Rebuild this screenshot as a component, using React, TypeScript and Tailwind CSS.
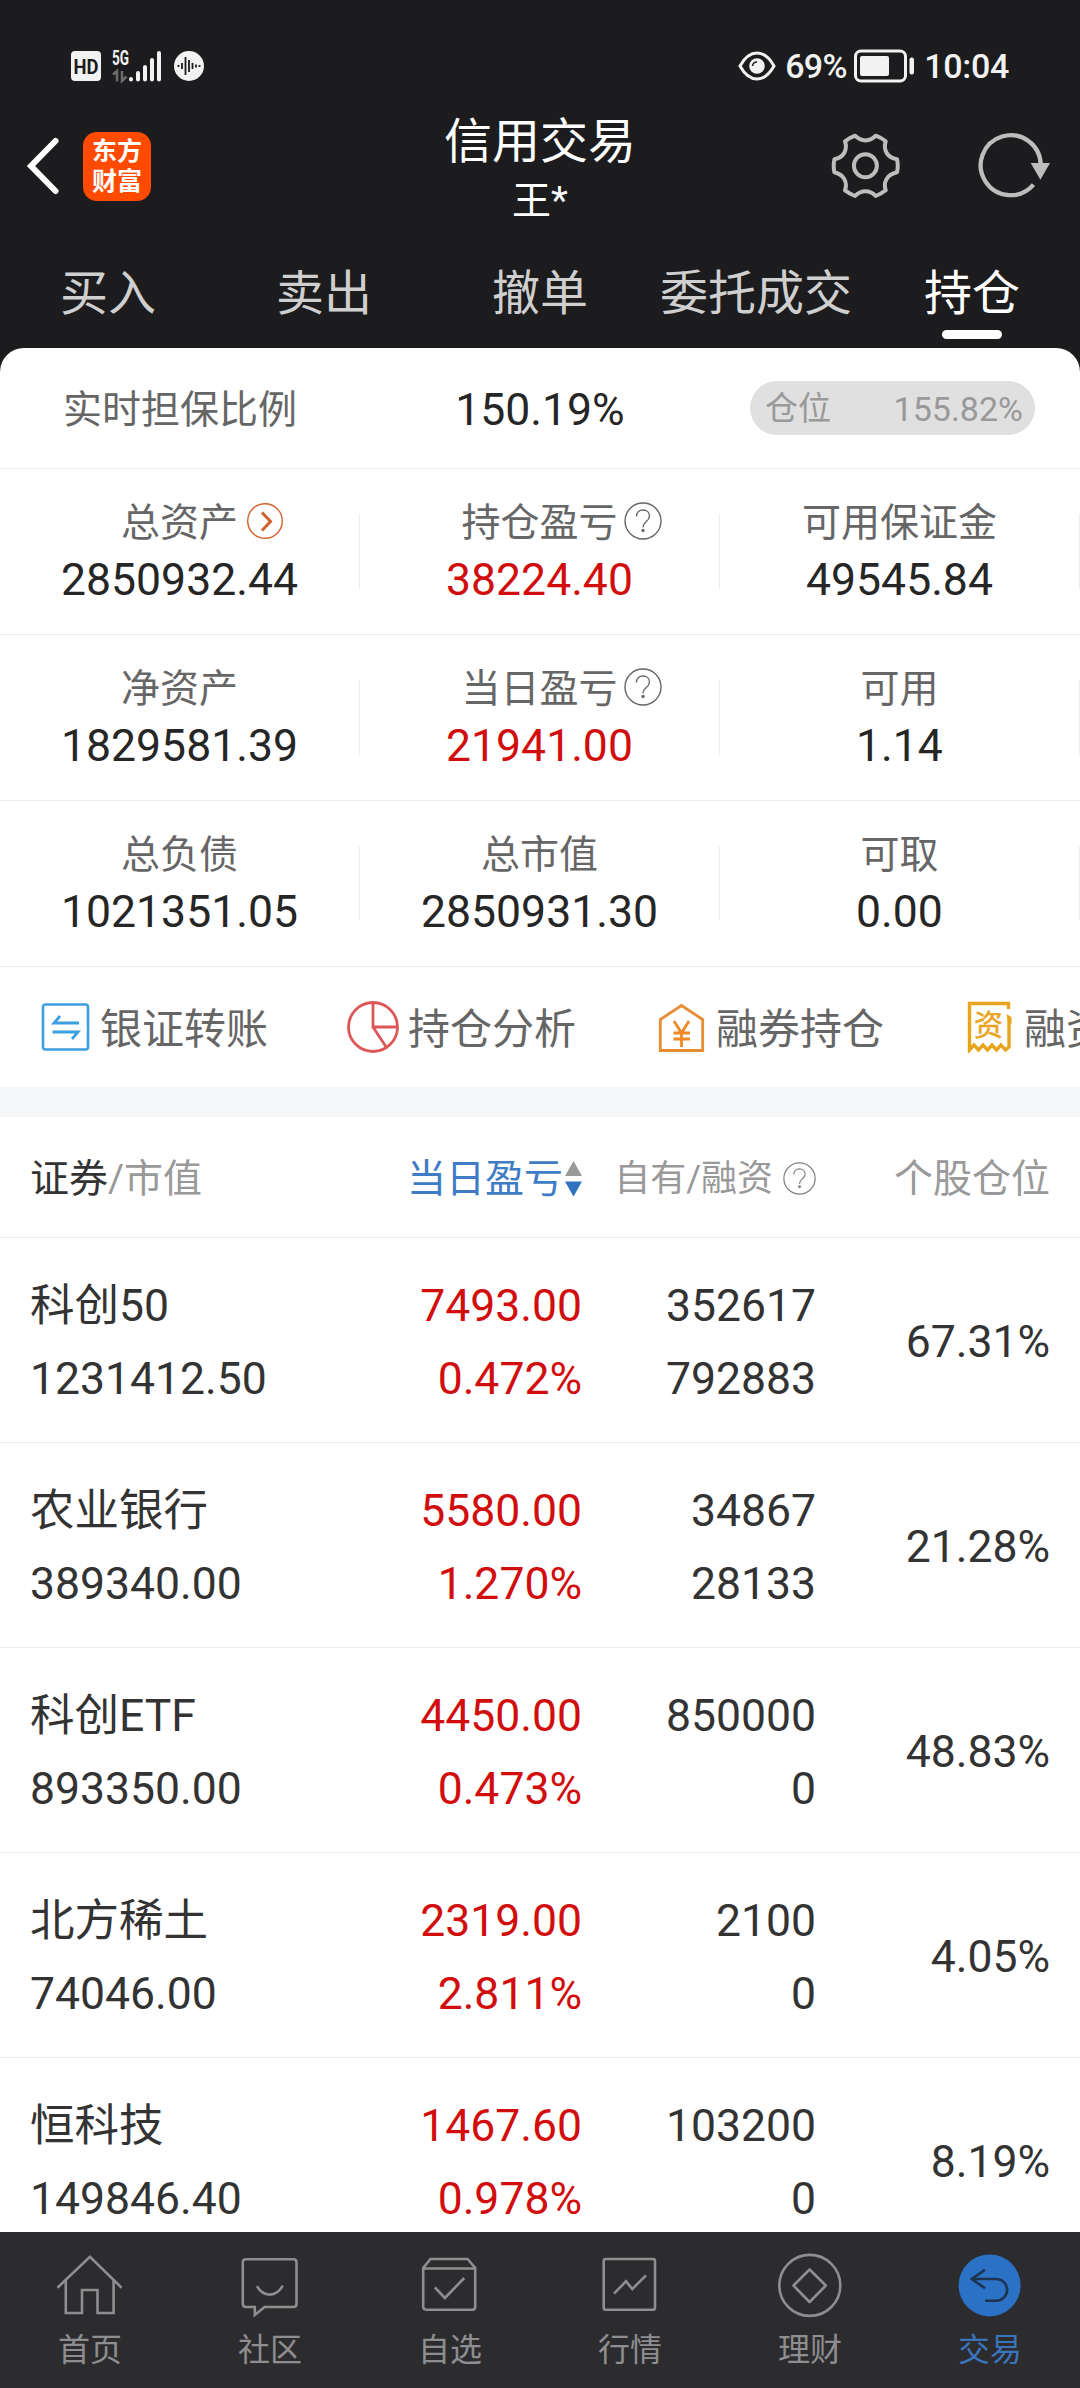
import type { ReactNode } from 'react';
import clsx from 'clsx';

const tabs = ['买入', '卖出', '撤单', '委托成交', '持仓'];

type Stat = { label: string; value: string; red?: boolean; icon?: 'arrow' | 'help' };

const stats: Stat[][] = [
  [
    { label: '总资产', value: '2850932.44', icon: 'arrow' },
    { label: '持仓盈亏', value: '38224.40', red: true, icon: 'help' },
    { label: '可用保证金', value: '49545.84' },
  ],
  [
    { label: '净资产', value: '1829581.39' },
    { label: '当日盈亏', value: '21941.00', red: true, icon: 'help' },
    { label: '可用', value: '1.14' },
  ],
  [
    { label: '总负债', value: '1021351.05' },
    { label: '总市值', value: '2850931.30' },
    { label: '可取', value: '0.00' },
  ],
];

const holdings = [
  { name: '科创50', market: '1231412.50', profit: '7493.00', rate: '0.472%', own: '352617', margin: '792883', weight: '67.31%' },
  { name: '农业银行', market: '389340.00', profit: '5580.00', rate: '1.270%', own: '34867', margin: '28133', weight: '21.28%' },
  { name: '科创ETF', market: '893350.00', profit: '4450.00', rate: '0.473%', own: '850000', margin: '0', weight: '48.83%' },
  { name: '北方稀土', market: '74046.00', profit: '2319.00', rate: '2.811%', own: '2100', margin: '0', weight: '4.05%' },
  { name: '恒科技', market: '149846.40', profit: '1467.60', rate: '0.978%', own: '103200', margin: '0', weight: '8.19%' },
];

function HelpIcon({ className }: { className?: string }) {
  return (
    <svg viewBox="0 0 38 38" className={className} fill="none" stroke="currentColor" strokeWidth="1.4">
      <circle cx="19" cy="19" r="18" />
      <path d="M12.500 14.500c0-4 2.700-6.500 6.500-6.500s6.500 2.400 6.500 6c0 3-1.800 4.300-3.800 6-1.900 1.600-2.700 2.800-2.700 5.300" />
      <circle cx="19" cy="28.500" r="1" fill="currentColor" />
    </svg>
  );
}

function ArrowIcon({ className }: { className?: string }) {
  return (
    <svg viewBox="0 0 38 38" className={className} fill="none" stroke="#d0622a">
      <circle cx="19" cy="19" r="17.300" strokeWidth="1.400" />
      <path d="M16 10.500l8.500 9-8.500 9" strokeWidth="3" />
    </svg>
  );
}

function StatusBar() {
  return (
    <div className="flex h-[102px] shrink-0 items-center justify-between pt-[30px] pr-[71px] pl-[71px] text-[#f2f2f2]">
      <div className="flex items-center">
        <svg viewBox="0 0 30 30" className="h-[30px] w-[30px]">
          <rect width="30" height="30" rx="4" fill="#f2f2f2" />
          <text x="2.500" y="22.500" fill="#1c1c1e" fontSize="21" fontWeight="700" textLength="25" lengthAdjust="spacingAndGlyphs">HD</text>
        </svg>
        <svg viewBox="0 0 52 34" className="ml-[10px] h-[34px] w-[52px] overflow-visible">
          <text x="1" y="15.500" fill="#f2f2f2" fontSize="20" fontWeight="700" textLength="17" lengthAdjust="spacingAndGlyphs">5G</text>
          <g stroke="#6b6b6d" strokeWidth="2.500" fill="none">
            <path d="M2 25.500l4-3.500v10.500M11 22v10l4.500-4.500" />
          </g>
          <g stroke="#f2f2f2" strokeWidth="4" strokeLinecap="round">
            <path d="M20 30v.500M27 24v6.500M34 18v12.500M41 11v19.500M48 4v26.500" />
          </g>
        </svg>
        <svg viewBox="0 0 30 30" className="ml-[11px] h-[30px] w-[30px]">
          <circle cx="15" cy="15" r="15" fill="#f2f2f2" />
          <path d="M4.500 14v2M8 12v6M11.500 6v18M15 9v12M18.500 12v6M22 13.500v3M25.500 14v2" stroke="#1c1c1e" strokeWidth="1.800" />
        </svg>
      </div>
      <div className="flex items-center">
        <svg viewBox="0 0 38 30" className="h-[30px] w-[38px]" fill="none" stroke="#f2f2f2" strokeWidth="3">
          <path d="M2 15C7 6 13 2 19 2s12 4 17 13c-5 9-11 13-17 13S7 24 2 15z" />
          <circle cx="19" cy="15" r="7.800" fill="#f2f2f2" stroke="none" />
          <path d="M14.500 15a4.500 4.500 0 0 1 4.500-4" stroke="#1c1c1e" strokeWidth="1.500" />
        </svg>
        <span className="ml-[9px] w-[62px] text-[34px] leading-none font-medium tracking-[-0.7px]">69%</span>
        <svg viewBox="0 0 62 34" className="ml-[7px] h-[34px] w-[62px]">
          <rect x="1.500" y="2" width="50" height="30" rx="5.500" fill="none" stroke="#f2f2f2" strokeWidth="3" />
          <rect x="6" y="7" width="29" height="20" rx="2" fill="#f2f2f2" />
          <rect x="55.500" y="8.500" width="4.500" height="17" rx="2" fill="#f2f2f2" />
        </svg>
        <span className="ml-[8px] text-[34px] leading-none font-medium tracking-[-0.3px]">10:04</span>
      </div>
    </div>
  );
}

function TitleBar() {
  return (
    <div className="grid h-[128px] shrink-0 grid-cols-3 items-center">
      <div className="flex items-center pl-[25px]">
        <svg viewBox="0 0 36 60" className="h-[60px] w-[36px]" fill="none" stroke="#fff" strokeWidth="6" strokeLinecap="round">
          <path d="M30.500 5L6 30l24.500 25" />
        </svg>
        <div className="ml-[22px] flex h-[69px] w-[68px] flex-col items-center justify-center rounded-[14px] bg-[#ff4a00] pt-[2px] text-[25px] leading-[30px] font-bold text-white">
          <span>东方</span>
          <span>财富</span>
        </div>
      </div>
      <div className="pt-[10px] text-center text-white">
        <div className="text-[48px] leading-[60px]">信用交易</div>
        <div className="text-[39px] leading-[58px]">王*</div>
      </div>
      <div className="flex items-center justify-end pr-[28px]">
        <svg viewBox="0 0 70 70" className="h-[70px] w-[70px]" fill="none" stroke="#bdbdbd" strokeWidth="4" strokeLinejoin="round">
          <path d="M25.100 4.700C31 11 40 11 45.700 4.700Q51 6.500 55.700 10.300C53 19 57 26.500 67 28.300Q68.500 35 67 41.300C57 43.500 53 51 55.700 59.300Q51 63 45.700 65C40 58.500 31 58.500 25.100 65Q20 63 15 59.300C18 51 13.500 43.500 4.400 41.300Q3 35 4.400 28.300C13.500 26.500 18 19 15 10.300Q20 6.500 25.100 4.700z" />
          <circle cx="35.400" cy="34.800" r="11.500" />
        </svg>
        <svg viewBox="0 0 76 70" className="ml-[76px] h-[70px] w-[76px]" fill="none">
          <path d="M57.500 53.700A30 30 0 1 1 64.700 34" stroke="#bdbdbd" strokeWidth="4.300" />
          <path d="M54.700 32h19.300L64.400 48.700z" fill="#bdbdbd" />
        </svg>
      </div>
    </div>
  );
}

function StatCell({ stat }: { stat: Stat }) {
  return (
    <div className="flex h-[165px] flex-1 items-center">
      <div className="flex flex-1 flex-col items-center">
        <div className="relative text-[39px] leading-[56px] text-[#666]">
          {stat.label}
          {stat.icon === 'help' && <HelpIcon className="absolute top-[7px] left-full ml-[6px] h-[38px] w-[38px]" />}
          {stat.icon === 'arrow' && <ArrowIcon className="absolute top-[7px] left-full ml-[8px] h-[38px] w-[38px]" />}
        </div>
        <div className={clsx('text-[44.5px] leading-[58px]', stat.red ? 'text-[#d10d0d]' : 'text-[#262626]')}>{stat.value}</div>
      </div>
      <div className="h-[75px] w-px bg-[#ebebeb]" />
    </div>
  );
}

function Shortcut({ label, children }: { label: string; children: ReactNode }) {
  return (
    <div className="flex w-[308px] shrink-0 items-center">
      <svg viewBox="0 0 52 52" className="h-[52px] w-[52px]" fill="none">
        {children}
      </svg>
      <span className="ml-[9px] pt-[5px] text-[42px] leading-[60px] whitespace-nowrap text-[#666]">{label}</span>
    </div>
  );
}

// 横向滚动，最后一项露出一部分
function Shortcuts() {
  return (
    <div className="flex h-[120px] overflow-hidden pl-[39px]">
      <Shortcut label="银证转账">
        <rect x="4" y="3.500" width="45" height="45" rx="2.500" stroke="#3b9fe0" strokeWidth="2.600" />
        <path d="M40 22H15l6-7M13.500 31H39l-6 7" stroke="#3b9fe0" strokeWidth="2.800" />
      </Shortcut>
      <Shortcut label="持仓分析">
        <circle cx="26" cy="26" r="24.500" stroke="#dd5757" strokeWidth="2.800" />
        <path d="M26 2v24h24M26 26l13.500 20.500" stroke="#dd5757" strokeWidth="2.800" />
      </Shortcut>
      <Shortcut label="融券持仓">
        <path d="M5.300 49.500V18.500L26.500 4.500 47.700 18.500V49.500z" stroke="#e58c35" strokeWidth="2.800" />
        <path d="M19 20l7.500 12L34 20M26.500 32v14M18.500 32h16.500M18.500 38h16.500" stroke="#f08a24" strokeWidth="2.800" />
      </Shortcut>
      <Shortcut label="融资">
        <path
          d="M45.500 8V2.500H6.500V49l4.500-5 4.500 5 4.500-5 4.500 5 4.500-5 4.500 5 4.500-5 4.500 5 3.500-3V16"
          stroke="#e8a41c"
          strokeWidth="3.400"
        />
        <path d="M43.500 13l5 3v7h-3" fill="#e8a41c" />
        <text x="25.500" y="35" fontSize="29" textAnchor="middle" fill="#e8a41c" stroke="#e8a41c" strokeWidth="0.500">资</text>
      </Shortcut>
    </div>
  );
}

function TableHead() {
  return (
    <div className="flex h-[121px] shrink-0 items-center border-b border-[#ebebeb] px-[30px] pt-[4px] text-[39px] text-[#999]">
      <div className="w-[322px]">
        <span className="text-[#333]">证券</span>/市值
      </div>
      <div className="flex w-[230px] items-center justify-end gap-[2px] text-[#3f7cc6]">
        当日盈亏
        <svg viewBox="0 0 17 36" className="h-[36px] w-[17px]">
          <path d="M8.500 0L17 15H0z" fill="#999" />
          <path d="M8.500 35.500L17 20.500H0z" fill="#2f72c0" />
        </svg>
      </div>
      <div className="flex w-[234px] items-center justify-end text-[36px]">
        自有/融资
        <HelpIcon className="mb-[2px] ml-[10px] h-[33px] w-[33px] text-[#808080]" />
      </div>
      <div className="flex-1 text-right">个股仓位</div>
    </div>
  );
}

function HoldingRow({ row }: { row: (typeof holdings)[number] }) {
  return (
    <div className="flex h-[205px] shrink-0 items-center border-b border-[#ebebeb] px-[30px] pt-[5px] text-[44.5px] leading-[73px] text-[#333]">
      <div className="w-[322px]">
        <div>{row.name}</div>
        <div>{row.market}</div>
      </div>
      <div className="w-[230px] text-right text-[#d10d0d]">
        <div>{row.profit}</div>
        <div>{row.rate}</div>
      </div>
      <div className="w-[234px] text-right">
        <div>{row.own}</div>
        <div>{row.margin}</div>
      </div>
      <div className="flex-1 text-right">{row.weight}</div>
    </div>
  );
}

function NavItem({ label, active, children }: { label: string; active?: boolean; children: ReactNode }) {
  return (
    <div className={clsx('flex flex-1 flex-col items-center pt-[18px]', active ? 'text-[#3a74bd]' : 'text-[#8e8e90]')}>
      <svg viewBox="0 0 72 72" className="h-[72px] w-[72px]" fill="none" stroke="currentColor" strokeWidth="2.600">
        {children}
      </svg>
      <span className="mt-[5px] text-[32px] leading-[46px]">{label}</span>
    </div>
  );
}

function BottomNav() {
  return (
    <nav className="flex h-[156px] shrink-0 bg-[#2c2c2e]">
      <NavItem label="首页">
        <path d="M3.500 37.700L35.900 6.700l31.700 31M11.800 30v33H28V40h15.500v23h16.100V30" />
      </NavItem>
      <NavItem label="社区">
        <path d="M11.800 9.300h47.700q3 0 3 3V54q0 3-3 3H30.500l-9.700 8V57h-9q-3 0-3-3V12.300q0-3 3-3z" />
        <path d="M22.900 36.200c6.500 11.300 19.500 11.300 25.800-.500" />
      </NavItem>
      <NavItem label="自选">
        <path d="M9.200 18l7.200-9h37.200l7.600 9v38.700q0 3-3 3H12.200q-3 0-3-3zM9.200 18.500h52" />
        <path d="M20.900 37.300l10 10.700 19.300-20" />
      </NavItem>
      <NavItem label="行情">
        <rect x="9.700" y="9" width="51.300" height="50.700" rx="2" />
        <path d="M20 43.700l12-12.400 6.300 7.700L52 25.300" />
      </NavItem>
      <NavItem label="理财">
        <circle cx="35.800" cy="35.400" r="30.500" />
        <path d="M35.600 19.500l16.200 16-16.200 16.500-16.100-16.500z" strokeLinejoin="round" />
      </NavItem>
      <NavItem label="交易" active>
        <circle cx="35.600" cy="35.400" r="31" fill="#2b72c6" stroke="none" />
        <path d="M31 19.700L17.800 29 31 38.300M17.800 29h24.500a10.850 10.850 0 0 1 0 21.700H31" stroke="#1d3350" />
      </NavItem>
    </nav>
  );
}

export default function App() {
  return (
    <div className="flex h-[2388px] w-[1080px] flex-col overflow-hidden bg-[#1c1c1e] font-['Roboto','Noto_Sans_CJK_SC',sans-serif]">
      <StatusBar />
      <TitleBar />

      <div className="flex h-[118px] shrink-0">
        {tabs.map((tab) => {
          const active = tab === '持仓';
          return (
            <div key={tab} className={clsx('flex flex-1 flex-col items-center pt-[34px] text-[48px] leading-[60px]', active ? 'text-white' : 'text-[#cfcfcf]')}>
              {tab}
              {active && <div className="mt-[6px] h-[9px] w-[60px] rounded-full bg-white" />}
            </div>
          );
        })}
      </div>

      <main className="flex min-h-0 flex-1 flex-col overflow-hidden rounded-t-[24px] bg-white">
        {/* 担保比例 */}
        <div className="flex h-[121px] shrink-0 items-center border-b border-[#ebebeb]">
          <div className="w-[360px] pt-[4px] text-center text-[39px] text-[#666]">实时担保比例</div>
          <div className="w-[360px] pt-[4px] text-center text-[44.5px] text-[#262626]">150.19%</div>
          <div className="ml-[30px] flex h-[54px] w-[285px] items-center justify-between rounded-full bg-[#e0e0e0] pt-[2px] pr-[12px] pl-[15px] text-[33px] text-[#999]">
            <span>仓位</span>
            <span className="text-[34px]">155.82%</span>
          </div>
        </div>

        {/* 资产数据 */}
        {stats.map((line) => (
          <div key={line[0].label} className="flex h-[166px] shrink-0 border-b border-[#ebebeb]">
            {line.map((stat) => (
              <StatCell key={stat.label} stat={stat} />
            ))}
          </div>
        ))}

        <div className="shrink-0 border-b-[30px] border-[#f6f7f9]">
          <Shortcuts />
        </div>

        {/* 持仓列表 */}
        <TableHead />
        {holdings.map((row) => (
          <HoldingRow key={row.name} row={row} />
        ))}
      </main>

      <BottomNav />
    </div>
  );
}
